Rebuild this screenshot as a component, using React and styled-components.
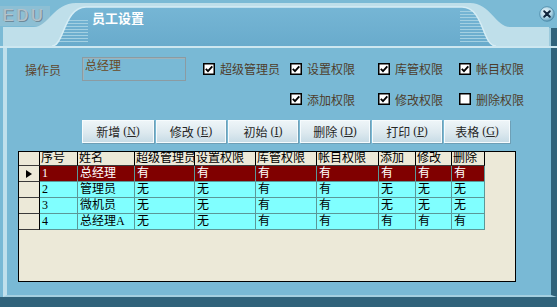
import React from 'react';
import styled, { createGlobalStyle } from 'styled-components';

const GlobalStyle = createGlobalStyle`
  html, body {
    margin: 0;
    padding: 0;
    background: #79b9d5;
  }
  body {
    font-family: "Noto Sans CJK SC", "Liberation Sans", sans-serif;
  }
`;

const Window = styled.div`
  width: 557px;
  height: 307px;
  box-sizing: border-box;
  background: #79b9d5;
  border-bottom: 10px solid #30637b;
  display: flex;
  flex-direction: column;
  overflow: hidden;
`;

const TitleBar = styled.div`
  position: relative;
  height: 46px;
  flex: none;
  display: flex;
  align-items: flex-start;
  border-bottom: 2px solid #cde7f0;
`;

const ChromeSvg = styled.svg`
  position: absolute;
  left: 0;
  top: 0;
  z-index: 0;
`;

const Logo = styled.div`
  position: relative;
  width: 89px;
  margin: 7px 0 0 3px;
  font-family: "Liberation Sans", sans-serif;
  font-size: 16px;
  line-height: 18px;
  letter-spacing: 3px;
  color: #b4c2ca;
  text-shadow: 1px 1px 0 #6f8a99, -1px 0 0 #9fb4c0;
`;

const Title = styled.div`
  position: relative;
  margin-top: 10px;
  font-size: 13px;
  line-height: 15px;
  font-weight: bold;
  color: #ffffff;
`;

const Spacer = styled.div`
  flex: 1;
`;

const CloseButton = styled.svg`
  position: relative;
  margin: 6px 2px 0 0;
`;

const Body = styled.div`
  flex: 1;
  margin-left: 3px;
  border-left: 4px solid #c0e0ec;
  border-right: 6px solid #30637b;
  border-bottom: 2px solid #a4cfe0;
  padding: 8px 0 0 11px;
  display: flex;
  flex-direction: column;
`;

const Form = styled.div`
  display: grid;
  grid-template-columns: 64px 121px 87px 88px 81px 1fr;
  grid-template-rows: 25px 14px;
  row-gap: 11px;
  align-items: center;
`;

const OperatorLabel = styled.div`
  padding-left: 7px;
  padding-top: 2px;
  font-size: 12px;
  color: #5e4730;
`;

const OperatorBox = styled.div`
  width: 104px;
  height: 24px;
  box-sizing: border-box;
  border: 1px solid #8b9ba2;
  box-shadow: inset 1px 1px 0 #9fb3bb;
  padding: 0 2px;
  font-size: 12px;
  line-height: 14px;
  color: #6b4a26;
  align-self: start;
  margin-top: 1px;
`;

const Check = styled.label`
  display: flex;
  align-items: center;
  gap: 5px;
  font-size: 12px;
  color: #4e3d2c;
  grid-column: ${p => p.$col};
  grid-row: ${p => p.$row};
  white-space: nowrap;
`;

const Box = styled.svg`
  flex: none;
`;

const ButtonRow = styled.div`
  display: flex;
  gap: 2px;
  margin-top: 14px;
  padding-left: 64px;
`;

const Button = styled.div`
  width: ${p => p.$w}px;
  height: 23px;
  box-sizing: border-box;
  border: 1px solid #f6fbfd;
  box-shadow: 1px 1px 0 #6e9fb6;
  background: linear-gradient(to bottom, #eef5f8 0%, #dde9ef 55%, #c8dce6 100%);
  display: flex;
  align-items: center;
  justify-content: center;
  font-size: 12px;
  color: #262626;

  span {
    font-family: "Liberation Serif", serif;
    margin-left: 3px;
  }
`;

const GridBox = styled.div`
  margin-top: 8px;
  width: 498px;
  height: 131px;
  box-sizing: border-box;
  border: 1px solid #000;
  background: #ece9d8;
`;

const Table = styled.div`
  display: grid;
  grid-template-columns: 21px 38px 57px 60px 61px 61px 62px 37px 36px 33px;
  grid-template-rows: 14px repeat(4, 16px);
  font-family: "Liberation Serif", "Noto Sans CJK SC", serif;
  font-size: 12px;
`;

const HeadCell = styled.div`
  box-sizing: border-box;
  border-right: 1px solid #000;
  border-bottom: 1px solid #3a3a3a;
  padding-left: 1px;
  line-height: 13px;
  color: #000;
  white-space: nowrap;
  overflow: hidden;
`;

const Indicator = styled.div`
  box-sizing: border-box;
  border-right: 1px solid #000;
  border-bottom: 1px solid #3a3a3a;
  display: flex;
  align-items: center;
  padding-left: 7px;
`;

const Pointer = styled.div`
  width: 0;
  height: 0;
  border-top: 4px solid transparent;
  border-bottom: 4px solid transparent;
  border-left: 6px solid #000;
`;

const Cell = styled.div`
  box-sizing: border-box;
  border-right: 1px solid #5b9898;
  border-bottom: 1px solid #5b9898;
  background: ${p => (p.$selected ? '#800000' : '#80ffff')};
  color: ${p => (p.$selected ? '#ffffff' : '#000000')};
  padding-left: 2px;
  line-height: 15px;
  white-space: nowrap;
  overflow: hidden;
`;

const Chrome = () => (
  <ChromeSvg width="557" height="46" viewBox="0 0 557 46">
    <defs>
      <linearGradient id="tabFill" x1="0" y1="0" x2="0" y2="1">
        <stop offset="0" stopColor="#76b6d5" />
        <stop offset="1" stopColor="#69abcc" />
      </linearGradient>
      <clipPath id="tabClip">
        <path d="M52 46 C64 46 64 7 86 7 H462 C484 7 482 46 496 46 Z" />
      </clipPath>
    </defs>
    <rect width="557" height="46" fill="#7bbad5" />
    <rect x="0" y="6" width="50" height="20" fill="#8dbfd4" />
    <path
      d="M3 46 V27 H34 C48 27 54 3 76 3 H470 C490 3 496 27 510 27 H549 V46 Z"
      fill="#bfdfea"
    />
    <path d="M52 46 C64 46 64 7 86 7 H462 C484 7 482 46 496 46 Z" fill="url(#tabFill)" />
    <g clipPath="url(#tabClip)" stroke="#a3d0e2" strokeWidth="1">
      {[20, 23, 26, 29, 32, 35, 38, 41].map(y => (
        <line key={'l' + y} x1="52" y1={y + 0.5} x2="88" y2={y + 0.5} />
      ))}
      {[11, 14, 17, 20, 23, 26, 29, 32, 35, 38, 41].map(y => (
        <line key={'r' + y} x1="460" y1={y + 0.5} x2="496" y2={y + 0.5} />
      ))}
    </g>
    <path d="M52 46 C64 46 64 7 86 7 H462 C484 7 482 46 496 46" fill="none" stroke="#d6edf5" strokeWidth="1.5" />
    <rect x="549" y="28" width="8" height="18" fill="#30637b" />
    <rect x="549" y="28" width="2" height="18" fill="#9ccadc" />
  </ChromeSvg>
);

const CheckBox = ({ checked }) => (
  <Box width="12" height="12" viewBox="0 0 12 12">
    <rect x="0.75" y="0.75" width="10.5" height="10.5" fill="#fff" stroke="#000" strokeWidth="1.5" />
    {checked && (
      <path d="M2.8 5.8 L5 8.2 L9.3 3.4" fill="none" stroke="#000" strokeWidth="1.8" />
    )}
  </Box>
);

const perms = [
  { label: '超级管理员', checked: true, col: 3, row: 1 },
  { label: '设置权限', checked: true, col: 4, row: 1 },
  { label: '库管权限', checked: true, col: 5, row: 1 },
  { label: '帐目权限', checked: true, col: 6, row: 1 },
  { label: '添加权限', checked: true, col: 4, row: 2 },
  { label: '修改权限', checked: true, col: 5, row: 2 },
  { label: '删除权限', checked: false, col: 6, row: 2 },
];

const buttons = [
  { text: '新增', key: 'N', w: 72 },
  { text: '修改', key: 'E', w: 70 },
  { text: '初始', key: 'I', w: 70 },
  { text: '删除', key: 'D', w: 70 },
  { text: '打印', key: 'P', w: 70 },
  { text: '表格', key: 'G', w: 66 },
];

const headers = ['序号', '姓名', '超级管理员', '设置权限', '库管权限', '帐目权限', '添加', '修改', '删除'];

const rows = [
  ['1', '总经理', '有', '有', '有', '有', '有', '有', '有'],
  ['2', '管理员', '无', '无', '有', '有', '无', '无', '无'],
  ['3', '微机员', '无', '无', '有', '有', '无', '无', '无'],
  ['4', '总经理A', '无', '无', '有', '有', '有', '有', '有'],
];

export default function App() {
  return (
    <>
      <GlobalStyle />
      <Window>
        <TitleBar>
          <Chrome />
          <Logo>EDU</Logo>
          <Title>员工设置</Title>
          <Spacer />
          <CloseButton width="16" height="16" viewBox="0 0 16 16">
            <defs>
              <radialGradient id="closeFill" cx="0.4" cy="0.35" r="0.7">
                <stop offset="0" stopColor="#f2fafd" />
                <stop offset="0.6" stopColor="#a9d2e4" />
                <stop offset="1" stopColor="#4f8fae" />
              </radialGradient>
            </defs>
            <circle cx="8" cy="8" r="7.3" fill="url(#closeFill)" stroke="#4a88a6" strokeWidth="0.8" />
            <path d="M5.2 5.2 L10.8 10.8 M10.8 5.2 L5.2 10.8" stroke="#10243a" strokeWidth="2" strokeLinecap="round" />
          </CloseButton>
        </TitleBar>
        <Body>
          <Form>
            <OperatorLabel>操作员</OperatorLabel>
            <OperatorBox>总经理</OperatorBox>
            {perms.map(p => (
              <Check key={p.label} $col={p.col} $row={p.row}>
                <CheckBox checked={p.checked} />
                {p.label}
              </Check>
            ))}
          </Form>
          <ButtonRow>
            {buttons.map(b => (
              <Button key={b.key} $w={b.w}>
                {b.text}
                <span>
                  (<u>{b.key}</u>)
                </span>
              </Button>
            ))}
          </ButtonRow>
          <GridBox>
            <Table>
              <Indicator />
              {headers.map(h => (
                <HeadCell key={h}>{h}</HeadCell>
              ))}
              {rows.map((r, i) => (
                <React.Fragment key={r[0]}>
                  <Indicator>{i === 0 && <Pointer />}</Indicator>
                  {r.map((v, j) => (
                    <Cell key={j} $selected={i === 0}>
                      {v}
                    </Cell>
                  ))}
                </React.Fragment>
              ))}
            </Table>
          </GridBox>
        </Body>
      </Window>
    </>
  );
}
